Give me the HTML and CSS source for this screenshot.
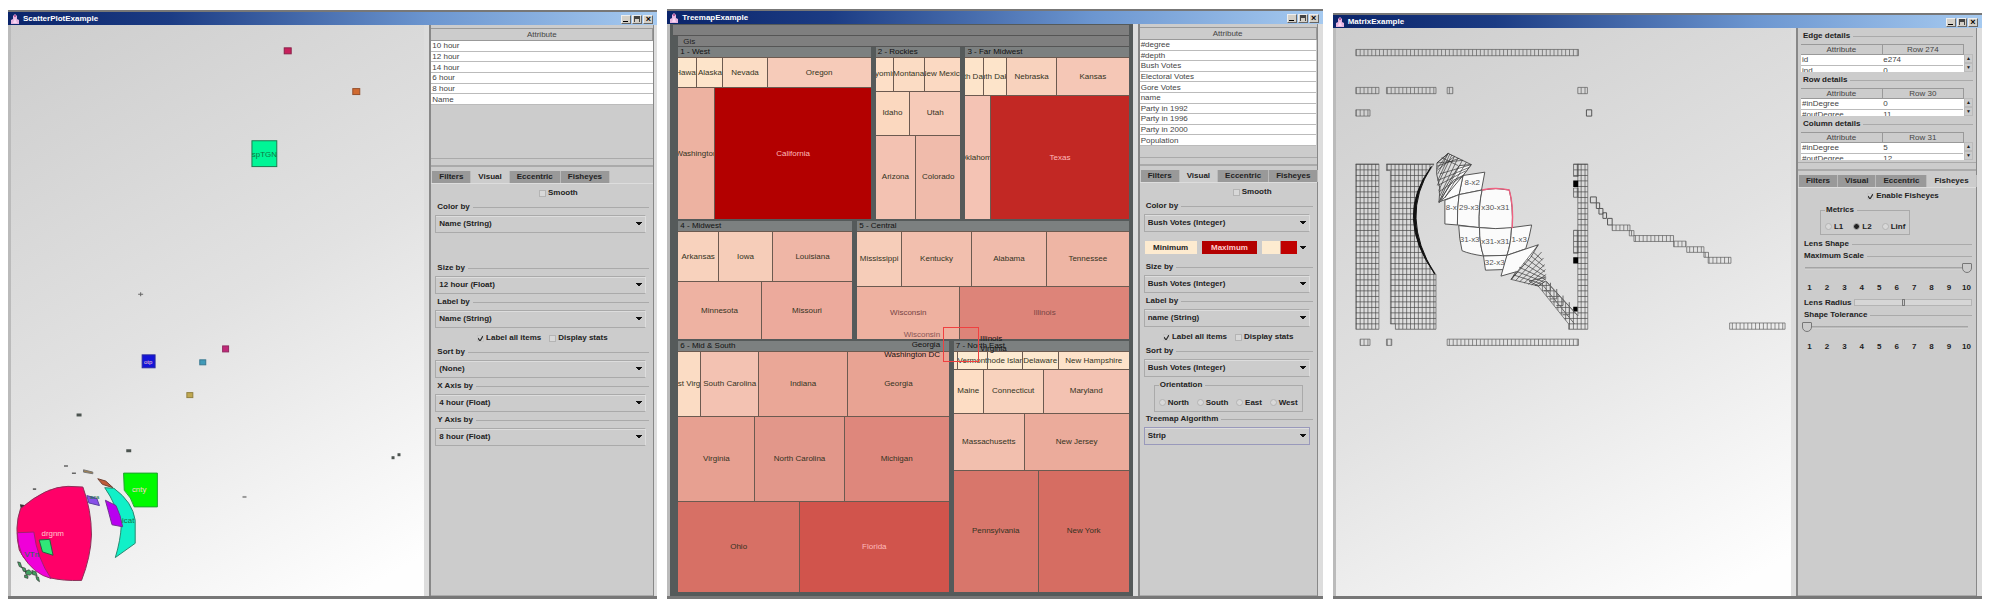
FILE: index.html
```html
<!DOCTYPE html>
<html lang="en">
<head>
<meta charset="utf-8">
<title>Visualization examples</title>
<link rel="stylesheet" href="styles.css">
</head>
<body>
<svg class="defs" width="0" height="0" aria-hidden="true">
  <symbol id="duke" viewBox="0 0 10 11"><path d="M1 10V6l2-1V2l2-2 2 2v3l2 1v4z" fill="#e6b4e0"/><path d="M3 9l2-5 2 5z" fill="#f8d8f4"/><path d="M4 1h2v2H4z" fill="#b45a9a"/></symbol>
</svg>

<section class="window scatter">
  <header class="titlebar">
    <svg class="app-icon"><use href="#duke"/></svg><h1>ScatterPlotExample</h1>
    <button class="wb min" aria-label="Minimize"></button><button class="wb max" aria-label="Maximize"></button><button class="wb close" aria-label="Close">×</button>
  </header>
  <div class="content">
    <div class="canvas">
      <svg viewBox="11 25 416 566" preserveAspectRatio="xMinYMin meet" role="img" aria-label="Scatter plot">
        <g stroke-width="1">
          <rect x="286" y="48" width="7" height="6" fill="#c8205c" stroke="#8a2048"/>
          <rect x="355" y="89" width="7" height="6" fill="#d06a30" stroke="#96502c"/>
          <rect x="253.500" y="141.500" width="25" height="26" fill="#00f596" stroke="#1c7a50"/>
          <rect x="143" y="357" width="13" height="13" fill="#1414d8" stroke="#2828a0"/>
          <rect x="224" y="348" width="6" height="6" fill="#c02878" stroke="#902860"/>
          <rect x="201" y="362" width="6" height="5" fill="#409ab8" stroke="#387890"/>
          <rect x="188" y="395" width="6" height="5" fill="#c0a850" stroke="#908040"/>
        </g>
        <path d="M139 296h5M141.500 294v4" stroke="#666"/>
        <g fill="#4c5450">
          <rect x="77" y="416" width="5" height="3"/><rect x="127" y="452" width="5" height="3"/>
          <rect x="394" y="459" width="3" height="3"/><rect x="400" y="456" width="3" height="3"/>
          <rect x="244" y="499" width="4" height="2" fill="#999"/>
        </g>
        <g transform="translate(0 450) scale(.33333)" stroke-width="3">
          <path d="M193 54h12v5h-12zM217 76h12v5h-12zM99 124h10v5h-10z" fill="#666"/>
          <path d="M252 68l28 7v5l-28-5z" fill="#a08050" stroke="#777"/>
          <path d="M295 95l24 7 22 20-32-10z" fill="#c05a38" stroke="#704030"/>
          <path d="M60 172l14 2-10 20z" fill="#333"/>
          <path d="M62 185Q140 118 205 118L250 120Q276 190 276 265Q274 330 246 402Q190 404 150 394Q80 360 58 310Q42 240 62 185z" fill="#ff0068" stroke="#8a3058"/>
          <path d="M52 258l50-2q10 80 52 140q-52-12-88-72q-14-32-14-66z" fill="#f000d8" stroke="#a02070"/>
          <path d="M118 280l32-2 10 48-32-10z" fill="#30e878" stroke="#286040"/>
          <path d="M262 146l30 8 8 22-32-8z" fill="#8850e8" stroke="#5840a0"/>
          <path d="M316 122l28 2Q400 165 408 220V290L348 333Q364 280 366 236Q350 170 316 122z" fill="#10f0c8" stroke="#288870"/>
          <path d="M318 160l32 16q14 28 20 64l-32-6q-10-38-20-74z" fill="#b800f0" stroke="#703090"/>
          <path d="M373 78h102v102h-70q-8-28-30-50z" fill="#00fa00" stroke="#20a030"/>
          <path d="M53 346l8 2 5 16-8-4zM66 362l10 3 3 12-9-3zM76 374l12-4 10 10-8 6-12-2zM96 372l12 4 4 12-14-4zM108 390l8 2 3 14-8-6zM74 386l10 2v8l-10-3z" fill="#40a060" stroke="#333" stroke-width="2"/>
        </g>
        <g class="plot-label">
          <text x="266" y="158">spTGN</text><text x="149" y="366" class="inv sm">otp</text>
          <text x="140" y="495" class="inv">cnty</text><text x="53" y="539" class="inv">drgnm</text><text x="129" y="526">icat</text><text x="32" y="560">VTn</text><text x="95" y="502" class="sm">aca</text>
        </g>
      </svg>
    </div>
    <aside class="side">
      <div class="list">
        <table class="attrs six"><thead><tr><th>Attribute</th></tr></thead><tbody>
          <tr><td>10 hour</td></tr><tr><td>12 hour</td></tr><tr><td>14 hour</td></tr><tr><td>6 hour</td></tr><tr><td>8 hour</td></tr><tr><td>Name</td></tr></tbody></table>
      </div>
      <div class="controls">
        <div class="tabs" role="tablist"><button role="tab">Filters</button><button role="tab" class="on">Visual</button><button role="tab">Eccentric</button><button role="tab">Fisheyes</button></div>
        <div class="panel">
          <div class="checks smooth"><label><input type="checkbox">Smooth</label></div>
          <div class="group"><label for="s-color">Color by</label><select id="s-color"><option>Name (String)</option></select></div>
          <div class="colorbar empty"></div>
          <div class="group"><label for="s-size">Size by</label><select id="s-size"><option>12 hour (Float)</option></select></div>
          <div class="group"><label for="s-label">Label by</label><select id="s-label"><option>Name (String)</option></select></div>
          <div class="checks"><label><input type="checkbox" checked>Label all items</label><label><input type="checkbox">Display stats</label></div>
          <div class="group"><label for="s-sort">Sort by</label><select id="s-sort"><option>(None)</option></select></div>
          <div class="group"><label for="s-x">X Axis by</label><select id="s-x"><option>4 hour (Float)</option></select></div>
          <div class="group"><label for="s-y">Y Axis by</label><select id="s-y"><option>8 hour (Float)</option></select></div>
        </div>
      </div>
    </aside>
  </div>
</section>

<section class="window tree">
  <header class="titlebar">
    <svg class="app-icon"><use href="#duke"/></svg><h1>TreemapExample</h1>
    <button class="wb min" aria-label="Minimize"></button><button class="wb max" aria-label="Maximize"></button><button class="wb close" aria-label="Close">×</button>
  </header>
  <div class="content">
    <div class="treemap">
      <div class="band"></div>
      <div class="root">
        <div class="band inner">Gis</div>
        <div class="regions" style="--h:171">
          <div class="region" style="--w:191"><h2>1 - West</h2>
            <div class="strip" style="--h:29"><span style="--w:18;--c:#fde6cc">Hawaii</span><span style="--w:25;--c:#fde4ca">Alaska</span><span style="--w:43;--c:#fbdcc4">Nevada</span><span style="--w:103;--c:#f6cbb9">Oregon</span></div>
            <div class="strip" style="--h:131"><span style="--w:36;--c:#edb2a1">Washington</span><span class="inv" style="--w:155;--c:#b30000">California</span></div></div>
          <div class="region" style="--w:84"><h2>2 - Rockies</h2>
            <div class="strip" style="--h:33"><span style="--w:17;--c:#fddfc7">Wyoming</span><span style="--w:30;--c:#fbdcc4">Montana</span><span style="--w:36;--c:#fbd9c2">New Mexico</span></div>
            <div class="strip" style="--h:43"><span style="--w:33;--c:#fbd8bf">Idaho</span><span style="--w:50;--c:#f6cab8">Utah</span></div>
            <div class="strip" style="--h:84"><span style="--w:39;--c:#f3c2b2">Arizona</span><span style="--w:44;--c:#f0bbab">Colorado</span></div></div>
          <div class="region" style="--w:162"><h2>3 - Far Midwest</h2>
            <div class="strip" style="--h:37"><span style="--w:18;--c:#fde4ca">North Dakota</span><span style="--w:22;--c:#fde4ca">South Dakota</span><span style="--w:49;--c:#f8d2bd">Nebraska</span><span style="--w:72;--c:#f5c7b6">Kansas</span></div>
            <div class="strip" style="--h:123"><span style="--w:25;--c:#f4c3b4">Oklahoma</span><span class="inv" style="--w:137;--c:#c22824">Texas</span></div></div>
        </div>
        <div class="regions" style="--h:117">
          <div class="region" style="--w:173"><h2>4 - Midwest</h2>
            <div class="strip" style="--h:49"><span style="--w:40;--c:#f8d2bd">Arkansas</span><span style="--w:53;--c:#f6cdb9">Iowa</span><span style="--w:80;--c:#efb6a6">Louisiana</span></div>
            <div class="strip" style="--h:57"><span style="--w:82;--c:#eeb2a2">Minnesota</span><span style="--w:90;--c:#ecaa9c">Missouri</span></div></div>
          <div class="region" style="--w:270"><h2>5 - Central</h2>
            <div class="strip" style="--h:54"><span style="--w:44;--c:#f6cdb9">Mississippi</span><span style="--w:69;--c:#f2bfae">Kentucky</span><span style="--w:74;--c:#f0bbab">Alabama</span><span style="--w:82;--c:#eeb5a4">Tennessee</span></div>
            <div class="strip" style="--h:52"><span class="dim" style="--w:102;--c:#eeb1a0">Wisconsin</span><span class="dim" style="--w:168;--c:#dd8479">Illinois</span></div></div>
        </div>
        <div class="regions" style="--h:249">
          <div class="region" style="--w:269"><h2>6 - Mid &amp; South</h2>
            <div class="strip" style="--h:64"><span style="--w:22;--c:#fbdcc4">West Virginia</span><span style="--w:57;--c:#f3c2b2">South Carolina</span><span style="--w:88;--c:#eaa797">Indiana</span><span style="--w:101;--c:#e8a393">Georgia</span></div>
            <div class="strip" style="--h:84"><span style="--w:76;--c:#e7a091">Virginia</span><span style="--w:88;--c:#e2978a">North Carolina</span><span style="--w:104;--c:#de877c">Michigan</span></div>
            <div class="strip" style="--h:90"><span style="--w:120;--c:#d77065">Ohio</span><span class="inv" style="--w:148;--c:#d1544c">Florida</span></div></div>
          <div class="region" style="--w:174"><h2>7 - North East</h2>
            <div class="strip" style="--h:17"><span style="--w:3;--c:#fde6cc"></span><span style="--w:30;--c:#fdebd2">Vermont</span><span style="--w:34;--c:#fdebd2">Rhode Island</span><span style="--w:36;--c:#fde8ce">Delaware</span><span style="--w:71;--c:#fde2ca">New Hampshire</span></div>
            <div class="strip" style="--h:43"><span style="--w:29;--c:#fdddc4">Maine</span><span style="--w:59;--c:#f8d2bd">Connecticut</span><span style="--w:85;--c:#f3c2b2">Maryland</span></div>
            <div class="strip" style="--h:56"><span style="--w:70;--c:#f2bfae">Massachusetts</span><span style="--w:104;--c:#ebab9b">New Jersey</span></div>
            <div class="strip" style="--h:122"><span style="--w:84;--c:#d8766b">Pennsylvania</span><span style="--w:90;--c:#d66d62">New York</span></div></div>
        </div>
      </div>
      <div class="lens"><p class="left"><i>Wisconsin</i><br>Georgia<br>Washington DC</p><p class="right">Illinois<br>Virginia</p></div>
    </div>
    <aside class="side">
      <div class="list">
        <table class="attrs ten"><thead><tr><th>Attribute</th></tr></thead><tbody>
          <tr><td>#degree</td></tr><tr><td>#depth</td></tr><tr><td>Bush Votes</td></tr><tr><td>Electoral Votes</td></tr><tr><td>Gore Votes</td></tr><tr><td>name</td></tr><tr><td>Party in 1992</td></tr><tr><td>Party in 1996</td></tr><tr><td>Party in 2000</td></tr><tr><td>Population</td></tr></tbody></table>
      </div>
      <div class="controls">
        <div class="tabs" role="tablist"><button role="tab">Filters</button><button role="tab" class="on">Visual</button><button role="tab">Eccentric</button><button role="tab">Fisheyes</button></div>
        <div class="panel">
          <div class="checks smooth"><label><input type="checkbox">Smooth</label></div>
          <div class="group"><label for="t-color">Color by</label><select id="t-color"><option>Bush Votes (Integer)</option></select></div>
          <div class="colorbar"><button class="lo">Minimum</button><button class="hi">Maximum</button><button class="ramp" aria-label="Color ramp"></button></div>
          <div class="group"><label for="t-size">Size by</label><select id="t-size"><option>Bush Votes (Integer)</option></select></div>
          <div class="group"><label for="t-label">Label by</label><select id="t-label"><option>name (String)</option></select></div>
          <div class="checks"><label><input type="checkbox" checked>Label all items</label><label><input type="checkbox">Display stats</label></div>
          <div class="group"><label for="t-sort">Sort by</label><select id="t-sort"><option>Bush Votes (Integer)</option></select></div>
          <fieldset class="orient"><legend>Orientation</legend><label><input type="radio" name="o">North</label><label><input type="radio" name="o">South</label><label><input type="radio" name="o">East</label><label><input type="radio" name="o">West</label></fieldset>
          <div class="group"><label for="t-alg">Treemap Algorithm</label><select id="t-alg" class="focus"><option>Strip</option></select></div>
        </div>
      </div>
    </aside>
  </div>
</section>

<section class="window matrix">
  <header class="titlebar">
    <svg class="app-icon"><use href="#duke"/></svg><h1>MatrixExample</h1>
    <button class="wb min" aria-label="Minimize"></button><button class="wb max" aria-label="Maximize"></button><button class="wb close" aria-label="Close">×</button>
  </header>
  <div class="content">
    <div class="canvas">
      <svg viewBox="15 83 1380 1680" preserveAspectRatio="xMinYMin meet" role="img" aria-label="Adjacency matrix">
        <defs>
          <pattern id="grid" x="75" y="495" width="11.750" height="16.667" patternUnits="userSpaceOnUse"><path d="M0 0V16.667M0 0H11.750" stroke="#444" stroke-width="4" fill="none"/></pattern>
          <pattern id="bars" x="75" y="0" width="11.750" height="40" patternUnits="userSpaceOnUse"><path d="M0 0V40" stroke="#555" stroke-width="4"/></pattern>
        </defs>
        <g fill="url(#bars)" stroke="#555" stroke-width="2">
          <path d="M75 148h675v19H75zM75 263h70v19H75zM168 263h150v19H168zM352 263h17v19h-17zM748 263h29v19h-29zM75 331h43v19H75zM88 1026h30v19H88zM168 1026h16v19h-16zM352 1026h398v19H352z"/>
          <path d="M852 680h54v17h-54zM904 697h14v16h-14zM918 712h120v18H918zM1038 729h38v17h-38zM1078 746h52v17h-52zM1130 763h14v15h-14zM1143 778h69v18h-69zM1208 977h168v19h-168z"/>
        </g>
        <g fill="none" stroke="#555" stroke-width="3"><path d="M774 331h16v19h-16zM786 595h18v18h-18zM804 613h10v17h-10zM812 630h12v17h-12zM824 643h11v17h-11zM838 660h14v20h-14z"/></g>
        <g fill="url(#grid)" stroke="#555" stroke-width="2">
          <path d="M75 495h70v501H75z"/>
          <path d="M168 495H312Q190 660 318 830V996H195V980H180V515H168z"/>
          <path d="M748 495h30v501H720V980L628 865L650 850L748 955z"/>
          <path d="M735 495h14v38h-14zM735 568h14v28h-14zM735 696h14v70h-14z"/>
        </g>
        <path d="M304 503Q190 655 314 828Q206 655 304 503z" fill="#111" stroke="#111" stroke-width="3"/>
        <path d="M734 545h15v20h-15zM734 778h15v19h-15zM734 928h13v14h-13z" fill="#000"/>
        <g fill="#fbfbfb" stroke="#555" stroke-width="3">
          <path d="M355 463L425 497L400 530L345 600L327 612L330 570L320 525L321 492z" fill="#ddd"/>
          <path d="M400 530L466 520L456 574L388 588z"/>
          <path d="M388 500l37-3-25 33-56 67-17 14 20-44zM370 545l30-15-12 58-61 22z"/>
          <path d="M345 605L388 588Q382 630 383 680L345 677z"/>
          <path d="M388 588L458 574Q447 620 449 688L383 680Q382 630 388 588z"/>
          <path d="M458 574Q500 565 540 574Q552 620 549 690Q500 694 449 688Q447 620 458 574z"/>
          <path d="M387 682L450 688Q450 740 462 774Q420 768 397 758Q388 720 387 682z"/>
          <path d="M450 688Q500 694 547 688Q545 740 533 772L462 774Q450 740 450 688z"/>
          <path d="M547 688L608 680Q602 715 590 752L533 772Q545 740 547 688z"/>
          <path d="M462 774L533 772L525 815L468 817z"/>
          <path d="M533 772L628 740L605 778L546 845L560 822L515 835z"/>
        </g>
        <path d="M458 574Q500 565 540 574Q554 620 549 690" fill="none" stroke="#f06080" stroke-width="4"/>
        <g fill="none" stroke="#333" stroke-width="2">
          <path d="M355 463L321 492M355 463L321 510M355 463L323 526M360 465L324 544M366 468L322 560M374 472L326 576M384 478L330 592M398 484L334 604M410 490L345 598M425 497L330 525M418 506L323 545M408 516L324 560M402 530L326 580M321 492L400 484M321 502L388 478M322 514L374 472M335 476L385 500"/>
          <path d="M628 740L546 845M638 762L560 848M644 780L572 852M648 800L585 856M650 815L598 860M652 830L608 862M652 842L618 864M650 850L628 865M546 845L628 865M555 832L636 858M560 820L644 852M570 808L650 845M583 796L650 836M595 784L648 822M606 774L646 806M615 764L640 786M628 865L600 850L652 838"/>
        </g>
        <path d="M652 850L748 955M640 860L738 980M665 855v24h-20M684 874v30h-20M703 894v30h-20M722 914v38h-20" stroke="#666" stroke-width="3" fill="none"/>
        <g class="matrix-label">
          <text x="498" y="634">x30-x31</text><text x="418" y="634">29-x3</text><text x="364" y="634">8-x</text><text x="428" y="560">8-x2</text><text x="420" y="731">31-x3</text><text x="498" y="738">x31-x31</text><text x="570" y="731">1-x3</text><text x="496" y="800">32-x3</text>
        </g>
      </svg>
    </div>
    <aside class="side">
      <div class="list details">
        <section><h2>Edge details</h2><div class="view"><table><thead><tr><th>Attribute</th><th>Row 274</th></tr></thead><tbody><tr><td>id</td><td>e274</td></tr><tr><td>ind</td><td>0</td></tr></tbody></table><div class="scroll"><button aria-label="Scroll up">▲</button><button aria-label="Scroll down">▼</button></div></div></section>
        <section><h2>Row details</h2><div class="view"><table><thead><tr><th>Attribute</th><th>Row 30</th></tr></thead><tbody><tr><td>#inDegree</td><td>0</td></tr><tr><td>#outDegree</td><td>11</td></tr></tbody></table><div class="scroll"><button aria-label="Scroll up">▲</button><button aria-label="Scroll down">▼</button></div></div></section>
        <section><h2>Column details</h2><div class="view"><table><thead><tr><th>Attribute</th><th>Row 31</th></tr></thead><tbody><tr><td>#inDegree</td><td>5</td></tr><tr><td>#outDegree</td><td>12</td></tr></tbody></table><div class="scroll"><button aria-label="Scroll up">▲</button><button aria-label="Scroll down">▼</button></div></div></section>
      </div>
      <div class="controls">
        <div class="tabs" role="tablist"><button role="tab">Filters</button><button role="tab">Visual</button><button role="tab">Eccentric</button><button role="tab" class="on">Fisheyes</button></div>
        <div class="panel">
          <div class="checks smooth"><label><input type="checkbox" checked>Enable Fisheyes</label></div>
          <fieldset class="metrics"><legend>Metrics</legend><label><input type="radio" name="m">L1</label><label><input type="radio" name="m" checked>L2</label><label><input type="radio" name="m">Linf</label></fieldset>
          <h3>Lens Shape</h3>
          <div class="slider"><label for="scale">Maximum Scale</label><input id="scale" type="range" min="1" max="10" value="10"><div class="ticks"><span>1</span><span>2</span><span>3</span><span>4</span><span>5</span><span>6</span><span>7</span><span>8</span><span>9</span><span>10</span></div></div>
          <div class="radius"><label for="radius">Lens Radius</label><input id="radius" type="range" min="0" max="100" value="42"></div>
          <div class="slider"><label for="tol">Shape Tolerance</label><input id="tol" type="range" min="1" max="10" value="1"><div class="ticks"><span>1</span><span>2</span><span>3</span><span>4</span><span>5</span><span>6</span><span>7</span><span>8</span><span>9</span><span>10</span></div></div>
        </div>
      </div>
    </aside>
  </div>
</section>
</body>
</html>
```
FILE: styles.css
```css
* { box-sizing: border-box; }
body { margin: 0; min-height: 100vh; padding: 9px 7px 8px 8px; display: flex; gap: 10px; background: #fff; color: #222; font: bold 8px/12px "Liberation Sans", Arial, sans-serif; }
button, select, input { font: inherit; color: inherit; margin: 0; }
h1, h2, h3, p { margin: 0; font: inherit; }
.defs { position: absolute; }

.window { flex: 650 1 0; min-width: 0; display: flex; flex-direction: column; background: #ccc; border: solid #777; border-width: 2px 0 3px; }
.scatter { margin-top: 1px; --side: 225px; --edge: 3px; --smooth: 32px; }
.tree { flex-grow: 656; --side: 180px; --edge: 5px; --smooth: 48px; }
.matrix { margin-top: 4px; --side: 181px; --edge: 5px; --smooth: 32px; }

.titlebar { display: flex; align-items: center; gap: 1px; height: 13px; flex: none; padding: 1px 4px 0 2px; background: linear-gradient(90deg, #0a246a, #1c3c84 25%, #6c96d0 65%, #a6caf0); color: #fff; }
.titlebar h1 { flex: 1; padding-left: 2px; }
.app-icon { width: 10px; height: 11px; }
.wb { width: 10px; height: 9px; padding: 0; border: 1px solid; border-color: #eee #666 #666 #eee; background: #d4d0c8; color: #000; font-size: 9px; line-height: 7px; }
.min { background: linear-gradient(#000, #000) 1px 5px / 5px 1px no-repeat #d4d0c8; }
.max { background: linear-gradient(#d4d0c8, #d4d0c8) center 3px / 4px 3px no-repeat, linear-gradient(#444, #444) center / 6px 6px no-repeat #d4d0c8; }

.content { flex: 1; display: flex; min-height: 0; padding-right: var(--edge); border-left: 3px solid #bbb; background: #ddd; }
.canvas { flex: 1; min-width: 0; display: flex; background: linear-gradient(150deg, #cdcdcd, #e2e2e2 50%, #fefefe 95%); }
.canvas svg { flex: 1; min-width: 0; min-height: 0; }
.plot-label { font: 8px "Liberation Sans", Arial, sans-serif; text-anchor: middle; fill: #174; }
.plot-label .inv { fill: #fcc; }
.plot-label .sm { font-size: 6px; }
.matrix-label { font: 24px "Liberation Sans", Arial, sans-serif; text-anchor: middle; fill: #555; }

.side { width: var(--side); flex: none; margin-left: 5px; display: flex; flex-direction: column; background: #ccc; border: solid #888; border-width: 0 1px 0 2px; }
.list { height: 134px; flex: none; padding-top: 3px; border-bottom: 1px solid #aaa; }
table { width: 100%; border-collapse: collapse; font-weight: normal; line-height: 9px; color: #444; }
th, td { padding: 0 1px; font-weight: normal; text-align: left; }
th { height: 12px; text-align: center; background: #ccc; border: 1px solid #999; border-width: 1px 1px 1px 0; }
td { background: #fff; border-bottom: 1px solid #bbb; }
.six { height: 77px; }
.ten { height: 119px; }

.controls { flex: 1; margin-top: 6px; padding-top: 4px; border-top: 2px solid #aaa; display: flex; flex-direction: column; }
.tabs { display: flex; padding-left: 1px; }
.tabs button { height: 12px; padding: 0 7px; border: 0; border-right: 1px solid #bbb; background: #999; line-height: 12px; }
.tabs .on { background: #ccc; }
.panel { flex: 1; padding: 1px 4px 0; border-top: 1px solid #ddd; border-bottom: 1px solid #aaa; }
.checks { display: flex; justify-content: center; gap: 8px; height: 16px; align-items: center; }
.smooth { padding-left: var(--smooth); }
.checks label, fieldset label { display: flex; align-items: center; gap: 2px; }
input[type=checkbox], input[type=radio] { appearance: none; width: 7px; height: 7px; border: 1px solid #b4b4b4; background: #d8d8d8; }
input[type=radio] { border-radius: 50%; }
input[type=radio]:checked { background: #222; }
input[type=checkbox]:checked { border-color: #c4c4c4; background: url("data:image/svg+xml,%3Csvg xmlns='http://www.w3.org/2000/svg' viewBox='0 0 7 7'%3E%3Cpath d='M1 3l2 3 3-5' fill='none' stroke='%23333' stroke-width='1.300'/%3E%3C/svg%3E") center / 7px 7px no-repeat #d0d0d0; }
.group { height: 34px; }
.group label, h3, .details h2, .slider label { display: flex; align-items: center; gap: 3px; padding-left: 2px; line-height: 12px; }
.group label::after, h3::after, .details h2::after, .slider label::after { content: ""; flex: 1; height: 1px; background: #aaa; }
select { appearance: none; display: block; width: calc(100% - 3px); height: 18px; margin-top: 2px; padding: 0 20px 0 3px; border: 1px solid #aaa; border-right-color: #ddd; border-radius: 0; box-shadow: inset 0 1px #ddd;
  background: linear-gradient(to top right, transparent 50%, #111 50%) right 6px center / 3px 4px no-repeat, linear-gradient(to top left, transparent 50%, #111 50%) right 3px center / 3px 4px no-repeat #ccc; }
.focus { border-color: #99b; }
.colorbar { height: 27px; display: flex; align-items: center; gap: 3px; padding-right: 3px; }
.colorbar button { height: 15px; padding: 0; border: 1px solid #ccc; }
.lo { flex: 56; background: #fdebd0; }
.hi { flex: 60; background: #b30000; color: #fcc; }
.colorbar .ramp { flex: 50; background: linear-gradient(to top right, transparent 50%, #111 50%) right 6px center / 3px 4px no-repeat, linear-gradient(to top left, transparent 50%, #111 50%) right 3px center / 3px 4px no-repeat, linear-gradient(90deg, #fdebd0 18px, #b88 18px 19px, #c00000 19px 35px, #ccc 35px); }

fieldset { margin: 0; padding: 4px 4px 1px; border: 1px solid #aaa; display: flex; }
legend { padding: 0 3px 0 1px; line-height: 12px; }
.orient { height: 33px; margin: 0 10px 1px; justify-content: space-between; }
.metrics { width: 88px; height: 31px; margin: 0 0 3px 18px; gap: 10px; }

.treemap { position: relative; flex: 1; min-width: 0; display: flex; flex-direction: column; padding: 1px 4px 4px 3px; background: #555a5a; font-weight: normal; }
.band { height: 11px; background: #7f7f7f; border-bottom: 1px solid #555; line-height: 11px; }
.root { flex: 1; display: flex; flex-direction: column; gap: 2px; padding-left: 5px; }
.inner { padding-left: 5px; margin-bottom: -2px; }
.regions { flex: var(--h) 1 0; min-height: 0; display: flex; gap: 5px; }
.region { flex: var(--w) 1 0; min-width: 0; display: flex; flex-direction: column; gap: 1px; background: #6c5a50; }
.region h2 { height: 10px; flex: none; padding-left: 2px; background: #7c8080; line-height: 10px; white-space: nowrap; color: #111; }
.strip { flex: var(--h) 1 0; min-height: 0; display: flex; gap: 1px; }
.strip span { flex: var(--w) 1 0; min-width: 0; overflow: hidden; display: flex; align-items: center; justify-content: center; background: var(--c); white-space: nowrap; color: #332; }
.strip .inv { color: #fbb; }
.strip .dim { color: #744; }
.lens { position: absolute; left: 59%; top: 53%; width: 36px; height: 35px; border: 1px solid #f04040; line-height: 10px; color: #111; }
.lens p { position: absolute; white-space: nowrap; }
.lens i { font-style: normal; color: #855; }
.left { right: 38px; top: 2px; text-align: right; }
.right { left: 36px; top: 6px; }

.matrix .details { height: 135px; padding: 2px 3px 0; }
.details section { height: 44px; }
.view { display: flex; height: 28px; margin-top: 2px; overflow: hidden; background: #fff; }
.view table { flex: 1; table-layout: fixed; height: 32px; }
.view th { height: 10px; }
.scroll { width: 9px; padding-top: 10px; background: #ccc; }
.scroll button { display: block; width: 9px; height: 9px; padding: 0; border: 1px solid #bbb; background: #ccc; font-size: 5px; line-height: 7px; }
.matrix .panel { padding-top: 0; }
.slider { height: 46px; }
input[type=range] { appearance: none; display: block; width: 100%; height: 12px; background: linear-gradient(#999, #ddd) center / 96% 3px no-repeat; }
input[type=range]::-webkit-slider-thumb { appearance: none; width: 10px; height: 10px; border: 1px solid #777; border-radius: 1px 1px 5px 5px; background: #ccc; }
.ticks { display: flex; justify-content: space-between; padding: 8px 1px 0 3px; }
.ticks span { width: 9px; text-align: center; }
.radius { display: flex; align-items: center; height: 13px; padding-left: 2px; gap: 2px; white-space: nowrap; }
.radius input { flex: 1; min-width: 0; height: 7px; background: #d6d6d6; border: 1px solid #b4b4b4; }
.radius input::-webkit-slider-thumb { width: 3px; height: 7px; border-radius: 0; }
```
